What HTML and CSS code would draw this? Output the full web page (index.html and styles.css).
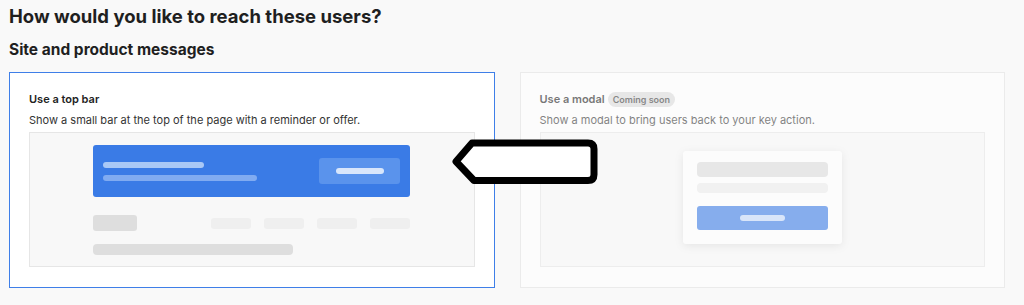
FILE: index.html
```html
<!DOCTYPE html>
<html lang="en">
<head>
    <meta charset="UTF-8">
    <meta name="viewport" content="width=device-width, initial-scale=1.0">
    <title>Reach users</title>
    <link rel="stylesheet" href="styles.css">
</head>
<body>

    <div class="page">
        <h1 class="page-title">How would you like to reach these users?</h1>
        <h2 class="section-title">Site and product messages</h2>

        <div class="options">
            <div class="option option-selected">
                <div class="option-head">
                    <span class="option-name">Use a top bar</span>
                </div>
                <p class="option-desc">Show a small bar at the top of the page with a reminder or offer.</p>

                <div class="preview">
                    <div class="preview-inner">
                        <div class="topbar">
                            <div class="topbar-text">
                                <span class="bar-line bar-line-1"></span>
                                <span class="bar-line bar-line-2"></span>
                            </div>
                            <div class="topbar-btn"><span></span></div>
                        </div>
                        <div class="fake-nav">
                            <div class="fake-logo"></div>
                            <div class="fake-links">
                                <span></span><span></span><span></span><span></span>
                            </div>
                        </div>
                        <div class="fake-content"></div>
                    </div>
                </div>
            </div>

            <div class="option option-disabled">
                <div class="option-head">
                    <span class="option-name">Use a modal</span>
                    <span class="badge">Coming soon</span>
                </div>
                <p class="option-desc">Show a modal to bring users back to your key action.</p>

                <div class="preview preview-center">
                    <div class="fake-modal">
                        <div class="modal-line-1"></div>
                        <div class="modal-line-2"></div>
                        <div class="modal-btn"><span></span></div>
                    </div>
                </div>
            </div>
        </div>

        <!-- callout arrow drawn on top -->
        <svg class="pointer" width="154" height="52" viewBox="0 0 154 52">
            <path d="M24 7 L140 7 Q146 7 146 13 L146 38.5 Q146 44.5 140 44.5 L26 44.5 L8 25.5 Z"
                  fill="#fff" stroke="#000" stroke-width="7" stroke-linejoin="round"/>
        </svg>
    </div>

</body>
</html>
```

FILE: styles.css
```css
body {
    font-family: Inter, 'Noto Sans', sans-serif;
    margin: 0;
    padding: 0;
    background-color: #f9f9f9;
    color: #1f1f1f;
    overflow: hidden;
}

.page {
    position: relative;
    padding: 4px 19px 0 9px;
}

.page-title {
    font-size: 18.5px;
    line-height: 24px;
    font-weight: 700;
    margin: 0 0 12px;
}

.section-title {
    font-size: 15.5px;
    line-height: 20px;
    font-weight: 700;
    margin: 0 0 12px;
}

.options {
    display: grid;
    grid-template-columns: 1fr 1fr;
    gap: 25px;
}

.option {
    background-color: #fff;
    border: 1px solid #e2e2e2;
    padding: 19px 19px 20px;
    display: flex;
    flex-direction: column;
}

.option-selected {
    border-color: #3f7fe8;
}

.option-disabled {
    opacity: 0.6;
}

.option-head {
    display: flex;
    align-items: center;
    gap: 3px;
    height: 14px;
}

.option-name {
    font-size: 11px;
    line-height: 14px;
    font-weight: 600;
    color: #222;
}

.badge {
    background-color: #dcdcdc;
    color: #3a3a3a;
    font-size: 9px;
    font-weight: 600;
    line-height: 15px;
    padding: 0 5px;
    border-radius: 8px;
}

.option-desc {
    font-size: 11px;
    line-height: 16px;
    color: #333;
    margin: 6px 0 4px;
}

.preview {
    background-color: #f8f8f8;
    border: 1px solid #e6e6e6;
    height: 135px;
    box-sizing: border-box;
}

.preview-inner {
    width: 317px;
    margin: 0 auto;
    padding-top: 12px;
}

/* top bar preview */
.topbar {
    background-color: #3a7be6;
    border-radius: 3px;
    height: 52px;
    padding: 0 10px;
    display: flex;
    align-items: center;
    justify-content: space-between;
}

.topbar-text {
    display: flex;
    flex-direction: column;
    gap: 7px;
}

.bar-line {
    display: block;
    height: 6px;
    border-radius: 3px;
}

.bar-line-1 {
    width: 101px;
    background-color: #a9c8f6;
}

.bar-line-2 {
    width: 154px;
    background-color: #80abf1;
}

.topbar-btn {
    width: 81px;
    height: 26px;
    border-radius: 3px;
    background-color: #5a93ec;
    display: flex;
    align-items: center;
    justify-content: center;
}

.topbar-btn span {
    width: 48px;
    height: 6px;
    border-radius: 3px;
    background-color: #d8e6fb;
}

.fake-nav {
    display: flex;
    align-items: center;
    justify-content: space-between;
    margin-top: 18px;
}

.fake-logo {
    width: 44px;
    height: 16px;
    border-radius: 3px;
    background-color: #dedede;
}

.fake-links {
    display: flex;
    gap: 13px;
}

.fake-links span {
    width: 40px;
    height: 11px;
    border-radius: 3px;
    background-color: #efefef;
}

.fake-content {
    width: 200px;
    height: 11px;
    border-radius: 4px;
    background-color: #dedede;
    margin-top: 13px;
}

/* modal preview */
.preview-center {
    display: flex;
    align-items: center;
    justify-content: center;
    padding-bottom: 5px;
}

.fake-modal {
    width: 159px;
    background-color: #fff;
    border-radius: 3px;
    box-shadow: 0 2px 8px rgba(0, 0, 0, 0.12);
    padding: 11px 14px 14px;
    box-sizing: border-box;
}

.modal-line-1 {
    height: 15px;
    border-radius: 4px;
    background-color: #dcdcdc;
}

.modal-line-2 {
    height: 10px;
    border-radius: 4px;
    background-color: #ececec;
    margin-top: 6px;
}

.modal-btn {
    height: 24px;
    border-radius: 3px;
    background-color: #3a7be6;
    margin-top: 13px;
    display: flex;
    align-items: center;
    justify-content: center;
}

.modal-btn span {
    width: 45px;
    height: 6px;
    border-radius: 3px;
    background-color: #c4d9fa;
}

.pointer {
    position: absolute;
    left: 448px;
    top: 136px;
}
```
